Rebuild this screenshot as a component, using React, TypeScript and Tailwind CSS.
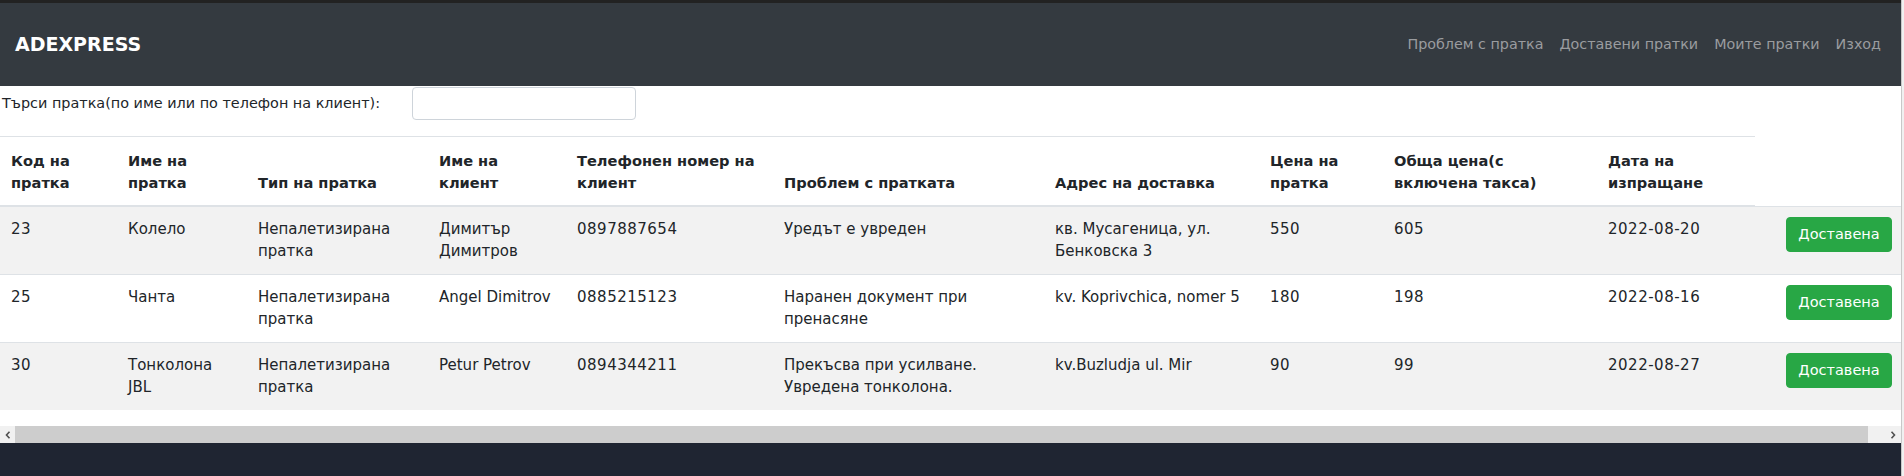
import React from "react";

type Row = {
  cells: string[][];
};

const headers: string[][] = [
  ["Код на", "пратка"],
  ["Име на", "пратка"],
  ["Тип на пратка"],
  ["Име на", "клиент"],
  ["Телефонен номер на", "клиент"],
  ["Проблем с пратката"],
  ["Адрес на доставка"],
  ["Цена на", "пратка"],
  ["Обща цена(с", "включена такса)"],
  ["Дата на", "изпращане"],
];

const rows: Row[] = [
  {
    cells: [
      ["23"],
      ["Колело"],
      ["Непалетизирана", "пратка"],
      ["Димитър", "Димитров"],
      ["0897887654"],
      ["Уредът е увреден"],
      ["кв. Мусагеница, ул.", "Бенковска 3"],
      ["550"],
      ["605"],
      ["2022-08-20"],
    ],
  },
  {
    cells: [
      ["25"],
      ["Чанта"],
      ["Непалетизирана", "пратка"],
      ["Angel Dimitrov"],
      ["0885215123"],
      ["Наранен документ при", "пренасяне"],
      ["kv. Koprivchica, nomer 5"],
      ["180"],
      ["198"],
      ["2022-08-16"],
    ],
  },
  {
    cells: [
      ["30"],
      ["Тонколона", "JBL"],
      ["Непалетизирана", "пратка"],
      ["Petur Petrov"],
      ["0894344211"],
      ["Прекъсва при усилване.", "Увредена тонколона."],
      ["kv.Buzludja ul. Mir"],
      ["90"],
      ["99"],
      ["2022-08-27"],
    ],
  },
];

const numericCols = [0, 4, 7, 8, 9];

function Lines({ lines }: { lines: string[] }) {
  return (
    <>
      {lines.map((l, i) => (
        <div key={i} className="whitespace-nowrap">
          {l}
        </div>
      ))}
    </>
  );
}

function ChevronLeft() {
  return (
    <svg width="6" height="8" viewBox="0 0 6 8">
      <path d="M4.5 0.8 L1.5 4 L4.5 7.2" fill="none" stroke="#505050" strokeWidth="1.6" />
    </svg>
  );
}

function ChevronRight() {
  return (
    <svg width="6" height="8" viewBox="0 0 6 8">
      <path d="M1.5 0.8 L4.5 4 L1.5 7.2" fill="none" stroke="#505050" strokeWidth="1.6" />
    </svg>
  );
}

export default function App() {
  return (
    <div
      className="w-[1904px] h-[476px] flex overflow-hidden bg-white text-[#212529]"
      style={{ fontFamily: '"DejaVu Sans", Verdana, sans-serif' }}
    >
      <div className="flex-1 min-w-0 flex flex-col">
        <div className="h-[3px] bg-[#222222] shrink-0" />
        <nav className="h-[83px] shrink-0 bg-[#343a40] flex items-center justify-between pl-[15px] pr-[12px]">
          <span className="text-white font-bold text-[19px] leading-none">ADEXPRESS</span>
          <div className="flex items-center text-[14.3px] text-[#9a9c9f]">
            <span className="px-2">Проблем с пратка</span>
            <span className="px-2">Доставени пратки</span>
            <span className="px-2">Моите пратки</span>
            <span className="px-2">Изход</span>
          </div>
        </nav>
        <div className="flex items-center mt-px h-[33px] shrink-0">
          <label className="w-[412px] pl-[2px] text-[14.4px] leading-[21px] whitespace-nowrap">
            Търси пратка(по име или по телефон на клиент):
          </label>
          <div className="w-[224px] h-[33px] border border-[#ced4da] rounded-[4px] bg-white" />
        </div>
        <div className="mt-4 overflow-hidden shrink-0">
          <table className="table-fixed border-collapse w-[1904px] text-[15px] leading-[21.5px]">
            <colgroup>
              <col className="w-[116px]" />
              <col className="w-[130px]" />
              <col className="w-[181px]" />
              <col className="w-[138px]" />
              <col className="w-[207px]" />
              <col className="w-[271px]" />
              <col className="w-[215px]" />
              <col className="w-[124px]" />
              <col className="w-[214px]" />
              <col className="w-[159px]" />
              <col className="w-[149px]" />
            </colgroup>
            <thead>
              <tr>
                {headers.map((h, i) => (
                  <th
                    key={i}
                    className={`text-left align-bottom font-bold text-[14.6px] border-t border-b-2 border-[#dee2e6] pt-[13px] pb-[12px] pr-[12px] ${
                      i === 0 ? "pl-[11px]" : "pl-[12px]"
                    }`}
                  >
                    <Lines lines={h} />
                  </th>
                ))}
                <th className="border-0 p-0" />
              </tr>
            </thead>
            <tbody>
              {rows.map((r, ri) => (
                <tr key={ri} className={ri % 2 === 0 ? "bg-[#f2f2f2]" : "bg-white"}>
                  {r.cells.map((c, ci) => (
                    <td
                      key={ci}
                      className={`align-top border-t border-[#dee2e6] pt-[12px] pb-[12px] pr-[12px] ${
                        ci === 0 ? "pl-[11px]" : "pl-[12px]"
                      } ${numericCols.includes(ci) ? "tracking-[0.5px]" : ""}`}
                    >
                      <Lines lines={c} />
                    </td>
                  ))}
                  <td className="align-top border-t border-[#dee2e6] pt-[10px] pb-[11px] pl-[31px] pr-[12px]">
                    <button className="w-[106px] h-[35px] rounded-[4px] bg-[#28a745] border border-[#28a745] text-white text-[14.5px] leading-none">
                      Доставена
                    </button>
                  </td>
                </tr>
              ))}
            </tbody>
          </table>
        </div>
        <div className="mt-4 h-[17px] shrink-0 flex bg-[#f1f1f1]">
          <div className="w-[15px] flex items-center justify-center">
            <ChevronLeft />
          </div>
          <div className="w-[1853px] bg-[#cdcdcd]" />
          <div className="flex-1" />
          <div className="w-[16px] flex items-center justify-center">
            <ChevronRight />
          </div>
        </div>
        <div className="flex-1 bg-[#1f2532]" />
      </div>
      <div className="w-[3px] shrink-0 flex">
        <div className="w-px bg-[#c8c8c8]" />
        <div className="flex-1 bg-[#f0f0f0]" />
      </div>
    </div>
  );
}
